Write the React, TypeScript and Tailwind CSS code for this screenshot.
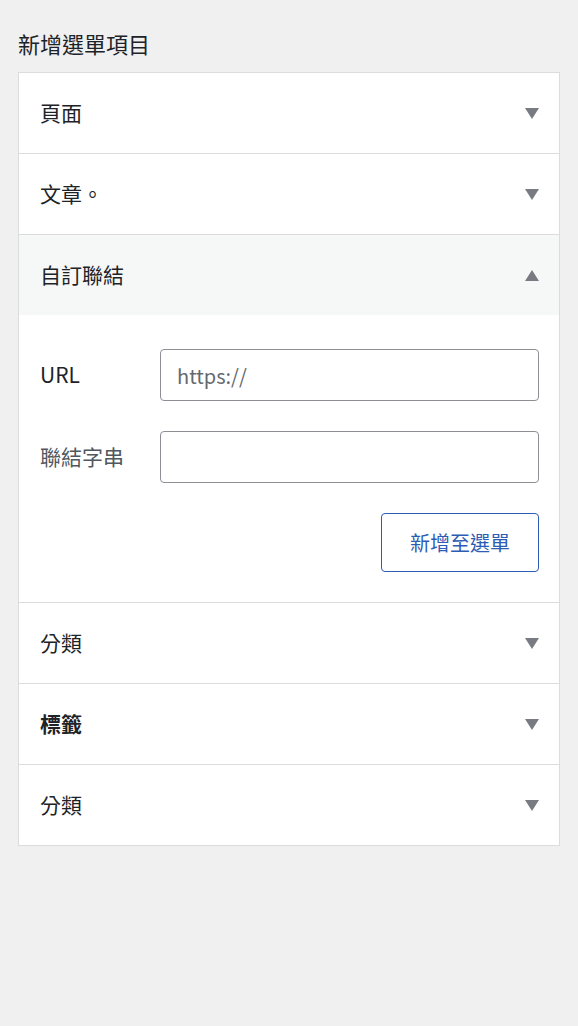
import { useState } from "react";

const font = { fontFamily: '"Noto Sans CJK TC", "Noto Sans", sans-serif' };

function Arrow({ up }: { up?: boolean }) {
  return (
    <svg width="14" height="11" viewBox="0 0 14 11" className="text-[#787c82]">
      {up ? (
        <polygon points="0,11 14,11 7,0" fill="currentColor" />
      ) : (
        <polygon points="0,0 14,0 7,11" fill="currentColor" />
      )}
    </svg>
  );
}

type Section = { id: string; title: string; bold?: boolean };

const sections: Section[] = [
  { id: "pages", title: "頁面" },
  { id: "posts", title: "文章。" },
  { id: "custom", title: "自訂聯結" },
  { id: "cats", title: "分類" },
  { id: "tags", title: "標籤", bold: true },
  { id: "cats2", title: "分類" },
];

export default function App() {
  const [open, setOpen] = useState("custom");

  return (
    <div className="min-h-[1026px] w-full bg-[#f0f0f1] px-[18px] pt-[28px] text-[#1d2327]" style={font}>
      <h2 className="mb-[14px] text-[22px] leading-[30px]">新增選單項目</h2>

      <div className="w-[542px] border border-[#dcdcde] bg-white">
        {sections.map((s, i) => {
          const isOpen = open === s.id;
          return (
            <div key={s.id} className={i > 0 ? "border-t border-[#dcdcde]" : ""}>
              <button
                onClick={() => setOpen(isOpen ? "" : s.id)}
                className={`flex h-[80px] w-full items-center justify-between pl-[21px] pr-[20px] text-left text-[21px] ${
                  isOpen ? "bg-[#f6f7f7]" : "bg-white"
                } ${s.bold ? "font-bold" : ""}`}
              >
                <span>{s.title}</span>
                <Arrow up={isOpen} />
              </button>

              {isOpen && (
                <div className="flex flex-col gap-[30px] pl-[21px] pr-[20px] pt-[34px] pb-[30px]">
                  <div className="flex items-center">
                    <label className="w-[120px] text-[21px]">URL</label>
                    <input
                      placeholder="https://"
                      className="h-[52px] flex-1 rounded-[4px] border border-[#8c8f94] px-[16px] text-[20px] placeholder:text-[#646970] outline-none"
                    />
                  </div>
                  <div className="flex items-center">
                    <label className="w-[120px] text-[21px] text-[#50575e]">聯結字串</label>
                    <input className="h-[52px] flex-1 rounded-[4px] border border-[#8c8f94] px-[16px] text-[20px] outline-none" />
                  </div>
                  <div className="flex justify-end">
                    <button className="h-[59px] w-[158px] rounded-[4px] border border-[#2e5cb5] bg-white text-[20px] text-[#2e5cb5]">
                      新增至選單
                    </button>
                  </div>
                </div>
              )}
            </div>
          );
        })}
      </div>
    </div>
  );
}
